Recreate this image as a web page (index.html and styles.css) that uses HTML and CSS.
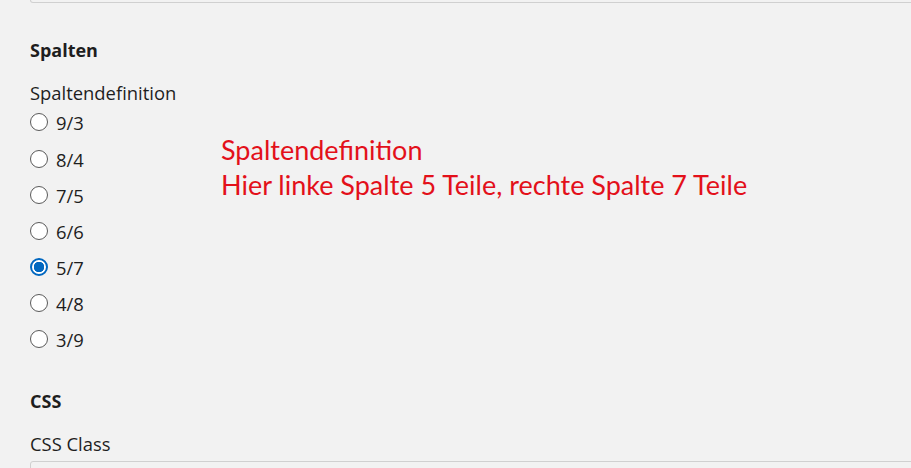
FILE: index.html
```html
<!DOCTYPE html>
<html lang="de">
<head>
<meta charset="utf-8">
<link rel="stylesheet" href="styles.css">
</head>
<body>
<div class="page">
  <div class="input input-top"></div>
  <section class="group">
    <h3 class="group-title">Spalten</h3>
    <div class="field">
      <div class="field-label">Spaltendefinition</div>
      <div class="columns-row">
        <div class="radios">
          <label class="radio"><span class="dot"></span><span>9/3</span></label>
          <label class="radio"><span class="dot"></span><span>8/4</span></label>
          <label class="radio"><span class="dot"></span><span>7/5</span></label>
          <label class="radio"><span class="dot"></span><span>6/6</span></label>
          <label class="radio checked"><span class="dot"></span><span>5/7</span></label>
          <label class="radio"><span class="dot"></span><span>4/8</span></label>
          <label class="radio"><span class="dot"></span><span>3/9</span></label>
        </div>
        <div class="note">
          <div>Spaltendefinition</div>
          <div>Hier linke Spalte 5 Teile, rechte Spalte 7 Teile</div>
        </div>
      </div>
    </div>
  </section>
  <section class="group">
    <h3 class="group-title">CSS</h3>
    <div class="field">
      <div class="field-label">CSS Class</div>
      <div class="input input-bottom"></div>
    </div>
  </section>
</div>
</body>
</html>
```
FILE: styles.css
```css
html, body {
  margin: 0;
  padding: 0;
  background: #f2f2f2;
  overflow: hidden;
}
body {
  font-family: "Open Sans", "Noto Sans", sans-serif;
  color: #1e1e1e;
}
.page {
  padding-left: 30px;
}
.input {
  background: #f2f2f2;
  border: 1px solid #d0d0d0;
  border-radius: 3px;
}
.input-top {
  height: 30px;
  margin-top: -28px;
  border-top: none;
  margin-right: -10px;
}
.group-title {
  margin: 0;
  font-size: 18px;
  font-weight: 700;
  line-height: 22px;
}
.group:first-of-type .group-title {
  margin-top: 36px;
}
.field-label {
  font-size: 18.4px;
  line-height: 24px;
  margin-top: 20px;
}
.columns-row {
  display: flex;
}
.radios {
  display: flex;
  flex-direction: column;
  width: 191px;
}
.radio {
  display: flex;
  align-items: center;
  height: 36px;
  font-size: 18.4px;
  gap: 8px;
}
.radios .radio:first-child {
  height: 24px;
  margin-top: 5px;
  margin-bottom: 7px;
}
.dot {
  box-sizing: border-box;
  width: 18px;
  height: 18px;
  border: 1px solid #5a5a5a;
  border-radius: 50%;
  background: #fff;
}
.checked .dot {
  border: 2px solid #0067c0;
  background: radial-gradient(circle, #0067c0 0 5px, #fff 5.5px);
}
.note {
  color: #e3101a;
  font-family: Lato, "Open Sans", sans-serif;
  font-size: 27px;
  line-height: 35px;
  margin-top: 27px;
}
.group + .group .group-title {
  margin-top: 33px;
}
.input-bottom {
  height: 30px;
  margin-top: 5px;
  margin-right: -10px;
}
```
